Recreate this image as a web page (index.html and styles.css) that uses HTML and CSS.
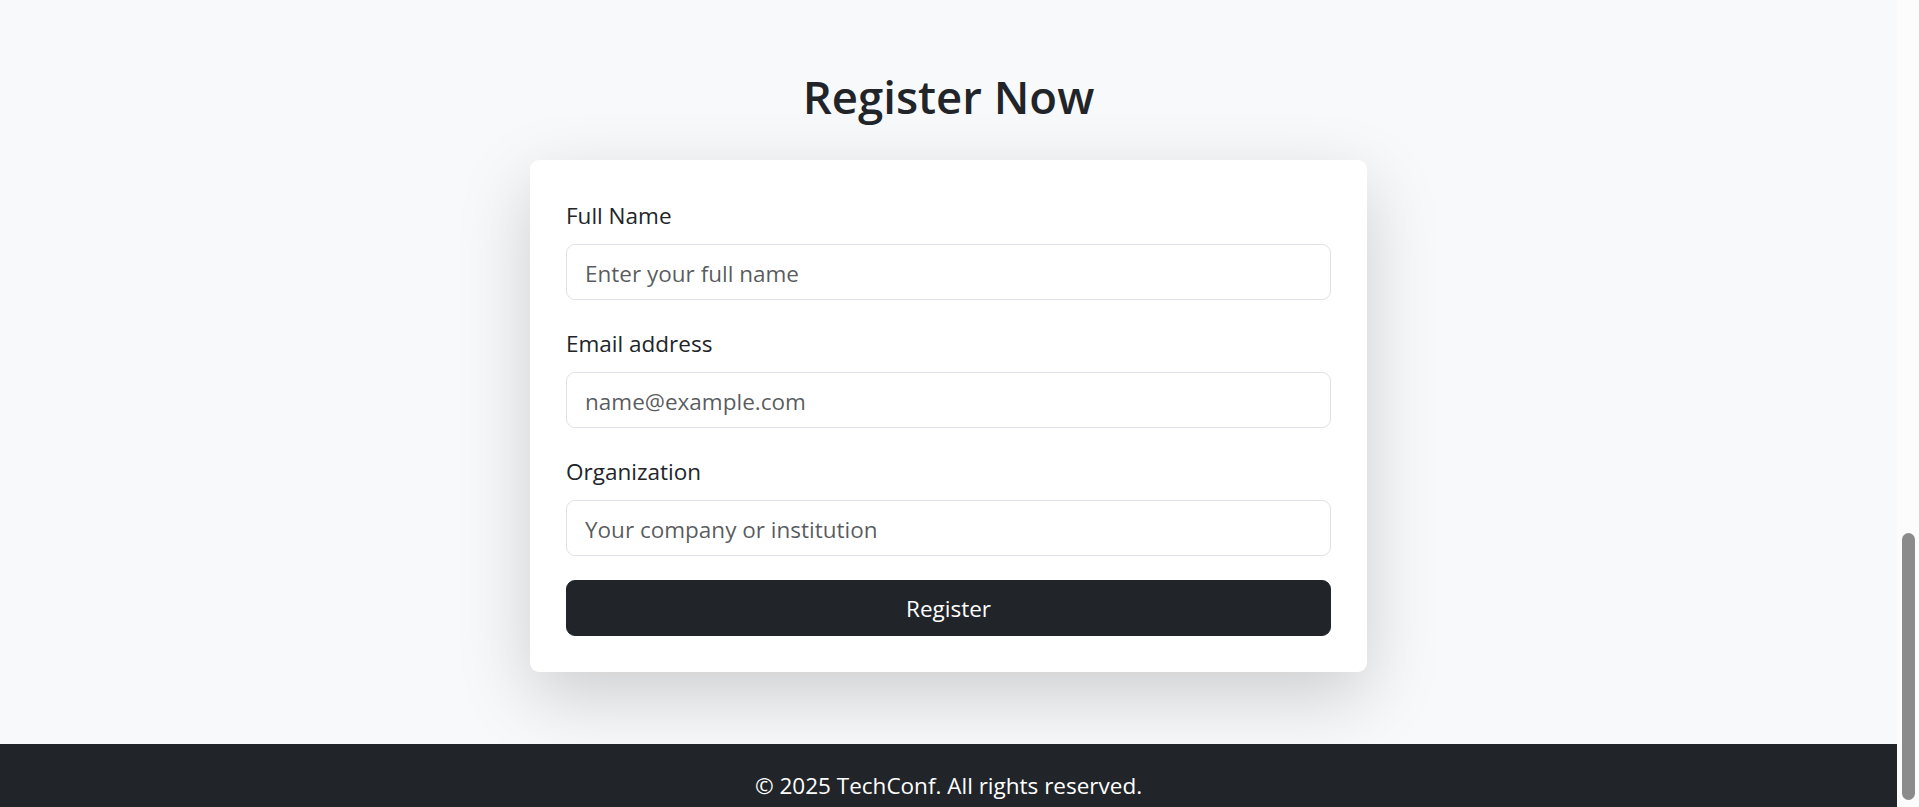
FILE: index.html
```html
<!DOCTYPE html>
<html lang="en">
<head>
<meta charset="utf-8">
<title>Register Now - TechConf</title>
<link rel="stylesheet" href="styles.css">
</head>
<body>
<div class="viewport">
  <div class="page">
    <main class="register">
      <h2 class="register-title">Register Now</h2>
      <form class="card">
        <div class="field">
          <label class="field-label" for="fullName">Full Name</label>
          <input class="field-input" id="fullName" type="text" placeholder="Enter your full name">
        </div>
        <div class="field">
          <label class="field-label" for="email">Email address</label>
          <input class="field-input" id="email" type="email" placeholder="name@example.com">
        </div>
        <div class="field">
          <label class="field-label" for="org">Organization</label>
          <input class="field-input" id="org" type="text" placeholder="Your company or institution">
        </div>
        <button class="submit" type="button">Register</button>
      </form>
    </main>
    <footer class="footer">
      <p class="footer-text">© 2025 TechConf. All rights reserved.</p>
    </footer>
  </div>
  <div class="scrollbar"><div class="scrollbar-thumb"></div></div>
</div>
</body>
</html>
```

FILE: styles.css
```css
* { box-sizing: border-box; }

html, body {
  margin: 0;
  padding: 0;
  height: 807px;
  overflow: hidden;
}

body {
  font-family: "Open Sans", "Noto Sans", "Liberation Sans", sans-serif;
  color: #212529;
  background: #f8f9fa;
}

.viewport {
  display: flex;
  height: 807px;
}

.page {
  flex: 1;
  display: flex;
  flex-direction: column;
  min-width: 0;
}

.register {
  display: flex;
  flex-direction: column;
  align-items: center;
  padding: 67px 0 72px;
  background: #f8f9fa;
}

.register-title {
  margin: 0 0 35px;
  font-size: 45.5px;
  line-height: 58px;
  font-weight: 600;
  color: #212529;
}

.card {
  width: 837px;
  padding: 36px;
  background: #fff;
  border-radius: 9px;
  box-shadow: 0 24px 72px rgba(0, 0, 0, 0.175);
}

.field {
  display: flex;
  flex-direction: column;
  margin-bottom: 24px;
}

.field-label {
  font-size: 22.5px;
  line-height: 36px;
  padding-top: 2px;
  margin-bottom: 10px;
  color: #212529;
}

.field-input {
  height: 56px;
  padding: 2px 18px 0;
  font-family: inherit;
  font-size: 22.5px;
  color: #212529;
  background: #fff;
  border: 1px solid #dee2e6;
  border-radius: 9px;
  outline: none;
}

.field-input::placeholder {
  color: rgba(33, 37, 41, 0.75);
}

.submit {
  display: block;
  width: 100%;
  height: 56px;
  font-family: inherit;
  font-size: 22.5px;
  color: #fff;
  background: #212529;
  border: 1px solid #212529;
  border-radius: 9px;
  cursor: pointer;
}

.footer {
  flex: 1;
  background: #212529;
  padding-top: 24px;
}

.footer-text {
  margin: 0;
  text-align: center;
  color: #fff;
  font-size: 22.5px;
  line-height: 36px;
}

.scrollbar {
  width: 22px;
  flex: none;
  background: #fcfcfc;
  position: relative;
}

.scrollbar-thumb {
  position: absolute;
  left: 5px;
  top: 533px;
  width: 13px;
  height: 267px;
  border-radius: 7px;
  background: #8b8b8b;
}
```
